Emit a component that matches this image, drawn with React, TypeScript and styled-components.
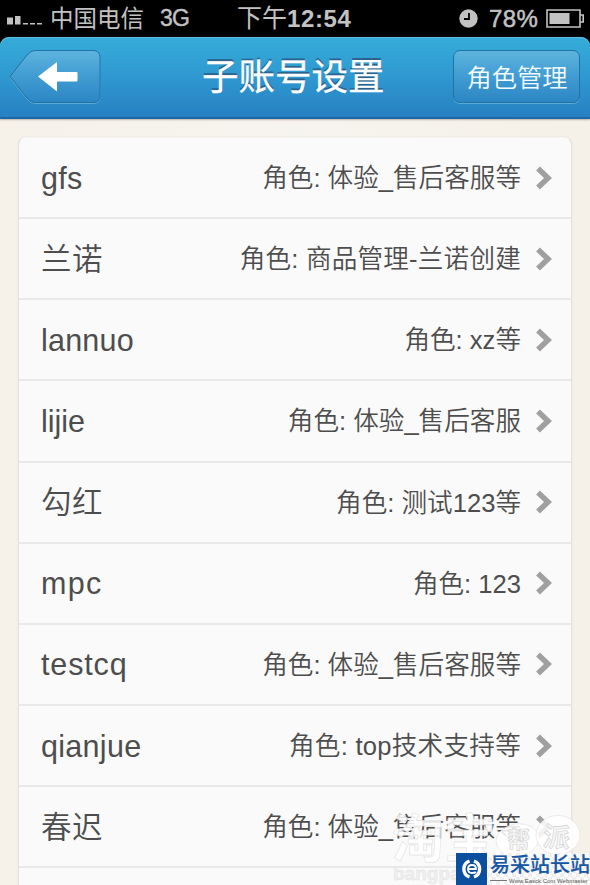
import React from 'react';
import styled, { createGlobalStyle } from 'styled-components';

const Global = createGlobalStyle`
  * { box-sizing: border-box; }
  html, body { margin: 0; background: #000; overflow: hidden; }
  body { font-family: "Liberation Sans", "Noto Sans CJK SC", sans-serif; }
`;

const Screen = styled.div`
  position: relative;
  width: 590px;
  height: 885px;
  overflow: hidden;
  background: #000;
`;

const StatusBar = styled.div`
  height: 37px;
  display: grid;
  grid-template-columns: 237px 1fr 131px;
  color: #c2c2c2;
  font-size: 23px;
  line-height: 37px;
  white-space: nowrap;
`;

const StatusGroup = styled.div`
  display: flex;
  align-items: center;
  height: 36px;
`;

const Signal = styled.svg`
  margin: 7px 7px 0 7px;
  flex: none;
`;

const Carrier = styled.span`
  width: 110px;
  padding-top: 2px;
  font-size: 23.5px;
`;

const Network = styled.span`
  padding-top: 1px;
  font-size: 23px;
  letter-spacing: -0.8px;
  -webkit-text-stroke: 0.4px #c2c2c2;
`;

const Clock = styled.span`
  font-size: 25px;
`;

const Digits = styled.b`
  font-size: 24px;
  letter-spacing: 0.6px;
`;

const Percent = styled.span`
  width: 57px;
  margin-left: 11px;
  font-size: 24px;
  letter-spacing: 0.4px;
  -webkit-text-stroke: 0.5px #c2c2c2;
`;

const Header = styled.header`
  height: 82px;
  display: grid;
  grid-template-columns: 110px 1fr 137px;
  padding: 13px 0 0;
  border-radius: 9px 9px 0 0;
  border-bottom: 2px solid #1d69a5;
  background: linear-gradient(#35acd9, #2f98d0 50%, #2780c2);
  box-shadow: inset 0 1px #62bddd, 0 1px 2px #b9b0a8;
  position: relative;
`;

const BackButton = styled.button`
  width: 92px;
  height: 54px;
  margin-left: 9px;
  padding: 0;
  border: 0;
  background: none;
`;

const Title = styled.h1`
  margin: 0 0 0 92px;
  font-size: 36.5px;
  line-height: 55px;
  font-weight: 400;
  color: #fff;
  -webkit-text-stroke: 0.3px #fff;
  text-shadow: 0 -2px 0 #2a638d;
  white-space: nowrap;
`;

const RoleButton = styled.button`
  width: 127px;
  height: 53px;
  padding: 0 0 0 1px;
  border: 1px solid #2372a4;
  border-radius: 7px;
  background: linear-gradient(#5db4dd, #439ed3 45%, #2c86c5);
  box-shadow: 0 1px #55acd9;
  color: #f4fbff;
  font: 350 25.3px/51px "Noto Sans CJK SC", sans-serif;
  white-space: nowrap;
`;

const Content = styled.main`
  height: 766px;
  padding: 18px 18px 0;
  background: linear-gradient(90deg, #f6f2ea, #f6f4ee 50%, #f5f1e8);
`;

const Card = styled.ul`
  width: 554px;
  height: 760px;
  margin: 0;
  padding: 0;
  list-style: none;
  border: 1px solid #e6e2dd;
  border-top-color: #f6f4f0;
  border-radius: 8px 8px 0 0;
  background: #fafafa;
  box-shadow: 0 0 2px #e3ded5;
`;

const Row = styled.li`
  display: flex;
  align-items: center;
  height: 81.15px;
  padding: 0 18px 0 22px;
  border-bottom: 2px solid #e9e9e9;
  color: #4d4d4d;
  white-space: nowrap;
`;

const Name = styled.span<{ $tracking: number }>`
  font-size: 30.5px;
  line-height: 44px;
  font-weight: 350;
  letter-spacing: ${(p) => p.$tracking}px;
`;

const Role = styled.span<{ $tracking: number }>`
  margin-left: auto;
  padding-top: 1px;
  font-size: 25.6px;
  line-height: 44px;
  font-weight: 350;
  letter-spacing: ${(p) => p.$tracking}px;
`;

const Chevron = styled.svg`
  margin-left: 14px;
  flex: none;
`;

const Watermark = styled.svg`
  position: absolute;
  left: 380px;
  top: 805px;
`;

const SiteBadge = styled.div`
  position: absolute;
  left: 456px;
  top: 853px;
  width: 134px;
  height: 32px;
  display: flex;
  gap: 3px;
  background: repeating-conic-gradient(#eeeeeecc 0 25%, #ffffffcc 0 50%) 0 0 / 8px 8px;
`;

const BadgeMark = styled.svg`
  flex: none;
`;

const BadgeText = styled.div`
  width: 100px;
  color: #1857a3;
  font-size: 20px;
  line-height: 25px;
  font-weight: 500;
  -webkit-text-stroke: 0.2px #1857a3;
  white-space: nowrap;
`;

const BadgeUrl = styled.div`
  display: flex;
  align-items: center;
  gap: 2px;
  height: 5px;
  font-size: 6px;
  line-height: 6px;
  font-weight: 400;
  color: #555;
  -webkit-text-stroke: 0;
  &::before {
    content: "";
    width: 17px;
    height: 1px;
    background: #777;
  }
`;

type Account = { name: string; role: string; nameTracking?: number; roleTracking?: number };

const accounts: Account[] = [
  { name: 'gfs', role: '体验_售后客服等', nameTracking: 0.3 },
  { name: '兰诺', role: '商品管理-兰诺创建', nameTracking: 0.5, roleTracking: 0.2 },
  { name: 'lannuo', role: 'xz等', nameTracking: 0.2 },
  { name: 'lijie', role: '体验_售后客服' },
  { name: '勾红', role: '测试123等', nameTracking: 0.5 },
  { name: 'mpc', role: '123', nameTracking: 1.3 },
  { name: 'testcq', role: '体验_售后客服等', nameTracking: 0.85 },
  { name: 'qianjue', role: 'top技术支持等', nameTracking: 0.3, roleTracking: 0.25 },
  { name: '春迟', role: '体验_售后客服等', nameTracking: 0.5 },
];

export default function App() {
  return (
    <>
      <Global />
      <Screen>
        <StatusBar>
          <StatusGroup>
            <Signal width="36" height="12" viewBox="0 0 36 12" fill="#c2c2c2">
              <path d="M0 1.500h6v7H0zM8 0h5.500v8.500H8zM16 7h5v1.500h-5zM23 7h5v1.500h-5zM30 7h5v1.500h-5z" />
            </Signal>
            <Carrier>中国电信</Carrier>
            <Network>3G</Network>
          </StatusGroup>
          <Clock>下午<Digits>12:54</Digits></Clock>
          <StatusGroup>
            <svg width="19" height="19" viewBox="0 0 19 19">
              <circle cx="9.5" cy="9.5" r="9.2" fill="#c2c2c2" />
              <path d="M10 4v6H5" fill="none" stroke="#000" strokeWidth="1.8" />
            </svg>
            <Percent>78%</Percent>
            <svg width="39" height="19" viewBox="0 0 39 19">
              <path d="M1 1h33v17H1zM34 6h3.2v7H34" fill="none" stroke="#c2c2c2" strokeWidth="1.6" />
              <path d="M3.500 4h20v11h-20z" fill="#c2c2c2" />
            </svg>
          </StatusGroup>
        </StatusBar>
        <Header>
          <BackButton aria-label="返回">
            <svg width="92" height="54" viewBox="0 0 92 54">
              <defs>
                <linearGradient id="back" x2="0" y2="1">
                  <stop stopColor="#5db4dd" />
                  <stop offset=".45" stopColor="#439ed3" />
                  <stop offset="1" stopColor="#2c86c5" />
                </linearGradient>
              </defs>
              <path d="M1 27 18 5q4-4.500 8-4.500h58q7 0 7 7v38q0 7-7 7H26q-4 0-8-4.500z" transform="translate(0 1)" fill="none" stroke="#55acd9" />
              <path d="M1 26.500 18 5q4-4.500 8-4.500h58q7 0 7 7v38q0 7-7 7H26q-4 0-8-4.500z" fill="url(#back)" stroke="#2372a4" />
              <path d="M29 26.500 48 12v10h19.500q1 0 1 1v7.500q0 1-1 1H48v10z" fill="#fff" />
            </svg>
          </BackButton>
          <Title>子账号设置</Title>
          <RoleButton>角色管理</RoleButton>
        </Header>
        <Content>
          <Card>
            {accounts.map(({ name, role, nameTracking = 0, roleTracking = 0 }) => (
              <Row key={name}>
                <Name $tracking={nameTracking}>{name}</Name>
                <Role $tracking={roleTracking}>角色: {role}</Role>
                <Chevron width="18" height="26" viewBox="0 0 18 26">
                  <path d="M3 3.500 13 13 3 22.500" fill="none" stroke="#a0a09e" strokeWidth="5.500" />
                </Chevron>
              </Row>
            ))}
          </Card>
        </Content>
        <Watermark width="210" height="80" viewBox="0 0 210 80" fontFamily="Noto Sans CJK SC, sans-serif">
          <g fill="#fff" fillOpacity=".86" stroke="#d8d8d8" strokeOpacity=".6" strokeWidth=".8">
            <text x="12" y="53" fontSize="52" fontWeight="700">淘宝</text>
            <ellipse cx="137.500" cy="35" rx="21.500" ry="16" transform="rotate(-8 137 35)" />
            <ellipse cx="178" cy="30" rx="22" ry="19.500" />
          </g>
          <g fill="#f6f6f6" stroke="#cfcfcf" strokeWidth=".6" fontWeight="700">
            <text x="127" y="43" fontSize="23">帮</text>
            <text x="163" y="42" fontSize="27" transform="rotate(6 176 34)">派</text>
          </g>
          <text x="13" y="75" fontSize="19" fontFamily="Liberation Sans, sans-serif" fontWeight="700" fill="#efefee" stroke="#e2e1df" strokeWidth=".4">bangpai.taobao.com</text>
        </Watermark>
        <SiteBadge>
          <BadgeMark width="31" height="32" viewBox="0 0 31 32">
            <path fill="#0c4f9f" d="M0 0h31v32H0z" />
            <path d="M13.500 8A8.500 8.500 0 0 0 13.500 24M18 8a8.500 8.500 0 0 1 0 16" fill="none" stroke="#fff" strokeWidth="3.400" />
            <path d="M12 16h8q0-4-4-4t-4 4 4 4q3 0 4-1" fill="none" stroke="#fff" strokeWidth="1.800" />
          </BadgeMark>
          <BadgeText>
            易采站长站
            <BadgeUrl>Www.Easck.Com Webmaster</BadgeUrl>
          </BadgeText>
        </SiteBadge>
      </Screen>
    </>
  );
}
